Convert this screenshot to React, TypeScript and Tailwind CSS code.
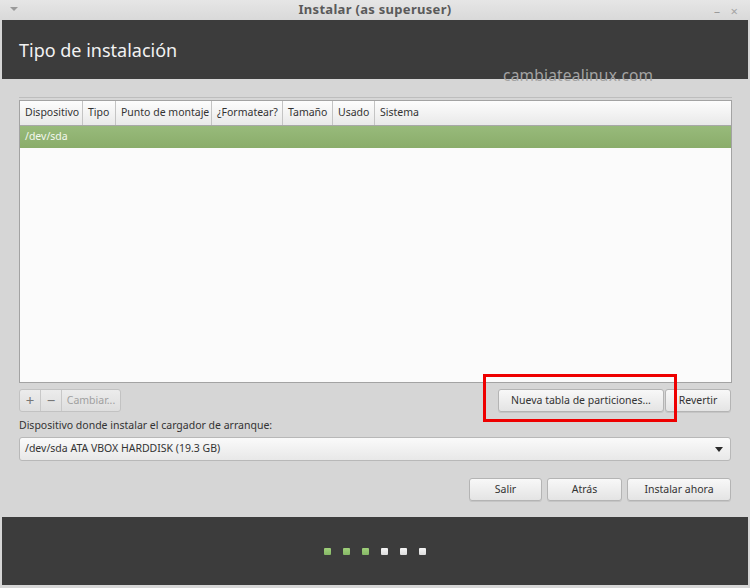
import React from 'react';

const columns = [
    { label: 'Dispositivo', w: 'w-[63px]' },
    { label: 'Tipo', w: 'w-[33px]' },
    { label: 'Punto de montaje', w: 'w-[96px]' },
    { label: '¿Formatear?', w: 'w-[71px]' },
    { label: 'Tamaño', w: 'w-[50px]' },
    { label: 'Usado', w: 'w-[42px]' },
    { label: 'Sistema', w: 'flex-1' },
];

const steps = [true, true, true, false, false, false];

function Button({ children, className = '' }: { children: React.ReactNode; className?: string }) {
    return (
        <button
            className={`h-[23px] rounded-[3px] border border-[#b4b4b4] bg-gradient-to-b from-[#f8f8f8] to-[#e4e4e4] text-[10.5px] text-[#333] flex items-center justify-center shadow-[0_1px_0_rgba(0,0,0,0.08)] ${className}`}
        >
            {children}
        </button>
    );
}

export default function App() {
    return (
        <div
            className="relative w-[750px] h-[588px] bg-[#d6d6d6] flex flex-col overflow-hidden"
            style={{ fontFamily: '"Noto Sans", "DejaVu Sans", sans-serif' }}
        >
            {/* Title bar */}
            <div className="relative h-[20px] flex items-center justify-center bg-gradient-to-b from-[#e6e6e6] to-[#d9d9d9]">
                <span className="absolute left-[10px] top-[7px] w-0 h-0 border-l-[4px] border-r-[4px] border-t-[4px] border-l-transparent border-r-transparent border-t-[#9a9a9a]" />
                <span className="text-[13px] font-bold text-[#5a5a5a] tracking-[0.3px]">Instalar (as superuser)</span>
                <span className="absolute right-[30px] top-[3px] text-[12px] text-[#9a9a9a]">–</span>
                <span className="absolute right-[12px] top-[2px] text-[13px] text-[#a5a5a5]">×</span>
            </div>

            <div className="flex-1 flex flex-col px-[2px] pb-[3px]">
                {/* Header */}
                <div className="h-[59px] bg-[#3c3c3c] flex items-center px-[17px]">
                    <h1 className="text-[18px] text-[#f2f2f2] mt-[1px]">Tipo de instalación</h1>
                </div>

                <div className="flex-1 flex flex-col px-[17px]">
                    {/* Partition table */}
                    <div className="mt-[18px] border-t border-[#bdbdbd] pt-[2px] mr-[-1px]">
                        <div className="h-[283px] border border-[#a3a3a3] bg-[#fbfbfb] flex flex-col">
                            <div className="h-[25px] flex bg-gradient-to-b from-[#fdfdfd] to-[#e9e9e9] border-b border-[#a8a8a8]">
                                {columns.map((c, i) => (
                                    <div
                                        key={c.label}
                                        className={`${c.w} flex items-center px-[5px] text-[10.5px] text-[#333] whitespace-nowrap ${i < columns.length - 1 ? 'border-r border-[#c4c4c4]' : ''}`}
                                    >
                                        {c.label}
                                    </div>
                                ))}
                            </div>
                            <div className="h-[22px] bg-gradient-to-b from-[#98ba7b] to-[#8aad6a] flex items-center px-[5px] text-[10.5px] text-[#f4f8ef]">
                                /dev/sda
                            </div>
                        </div>
                    </div>

                    {/* Edit buttons */}
                    <div className="mt-[6px] flex items-center">
                        <div className="flex h-[23px] rounded-[3px] border border-[#c2c2c2] bg-gradient-to-b from-[#ececec] to-[#dedede]">
                            <span className="w-[21px] flex items-center justify-center text-[15px] text-[#777] border-r border-[#c8c8c8]">+</span>
                            <span className="w-[21px] flex items-center justify-center text-[15px] text-[#777] border-r border-[#c8c8c8]">−</span>
                            <span className="w-[58px] flex items-center justify-center text-[10.5px] text-[#a0a0a0]">Cambiar...</span>
                        </div>
                        <div className="flex-1" />
                        <Button className="w-[166px]">Nueva tabla de particiones...</Button>
                        <Button className="w-[66px] ml-[1px]">Revertir</Button>
                    </div>

                    {/* Boot loader device */}
                    <div className="mt-[6px] text-[10.5px] leading-[15px] text-[#333]">Dispositivo donde instalar el cargador de arranque:</div>
                    <div className="mt-[4px] h-[24px] rounded-[3px] border border-[#b8b8b8] bg-gradient-to-b from-[#fafafa] to-[#e8e8e8] flex items-center px-[5px] text-[10.5px] text-[#333]">
                        <span className="flex-1">/dev/sda ATA VBOX HARDDISK (19.3 GB)</span>
                        <span className="w-0 h-0 border-l-[4px] border-r-[4px] border-t-[5px] border-l-transparent border-r-transparent border-t-[#2a2a2a] mr-[2px]" />
                    </div>

                    {/* Navigation */}
                    <div className="mt-[17px] flex justify-end gap-[5px]">
                        <Button className="w-[73px]">Salir</Button>
                        <Button className="w-[75px]">Atrás</Button>
                        <Button className="w-[104px] border-[#9cc47c]">Instalar ahora</Button>
                    </div>
                    <div className="flex-1" />
                </div>

                {/* Footer with progress */}
                <div className="h-[68px] bg-[#3c3c3c] flex items-center justify-center gap-[12px]">
                    {steps.map((done, i) => (
                        <span
                            key={i}
                            className={`w-[7px] h-[7px] rounded-[1px] ${done ? 'bg-gradient-to-b from-[#9fd07a] to-[#86b866]' : 'bg-gradient-to-b from-[#f6f6f6] to-[#dcdcdc]'}`}
                        />
                    ))}
                </div>
            </div>

            {/* Watermark */}
            <span className="absolute left-[503px] top-[64px] text-[15.5px] text-[#a3a3a3] tracking-[0.2px]">cambiatealinux.com</span>

            {/* Highlight box */}
            <div className="absolute left-[483px] top-[374px] w-[194px] h-[48px] border-[3px] border-[#ee0000]" />
        </div>
    );
}
